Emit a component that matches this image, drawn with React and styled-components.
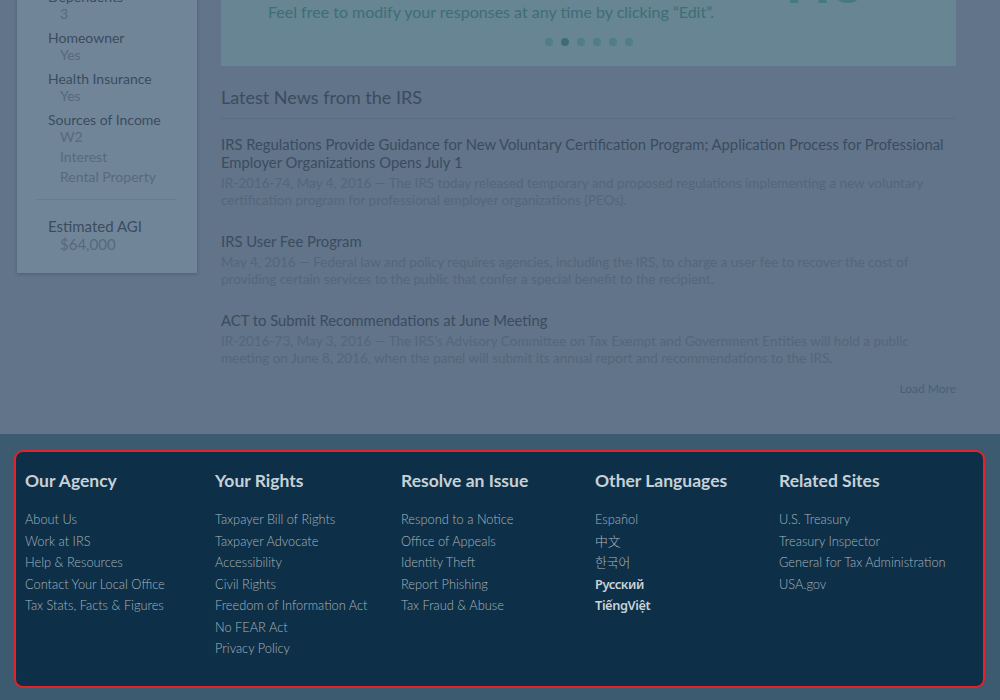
import React from "react";
import styled, { createGlobalStyle } from "styled-components";

const GlobalStyle = createGlobalStyle`
  html, body { margin: 0; padding: 0; background: #617489; }
  body { font-family: Lato, "Open Sans", sans-serif; overflow: hidden; }
  * { box-sizing: border-box; }
`;

const Page = styled.div`
  width: 1000px;
  display: flex;
  flex-direction: column;
`;

const Top = styled.div`
  display: flex;
  align-items: flex-start;
  gap: 24px;
  padding: 0 44px 38px 17px;
  margin-top: -60px;
  background: #617489;
`;

const Sidebar = styled.aside`
  width: 180px;
  flex: none;
  background: #718599;
  box-shadow: 0 1px 3px rgba(20, 35, 55, 0.25);
  padding: 9px 21px 12px 20px;
`;

const Group = styled.div`
  padding-left: 11px;
  margin-bottom: 7px;
`;

const Label = styled.div`
  font-size: ${(p) => (p.$big ? "15px" : "14px")};
  line-height: ${(p) => (p.$big ? "16px" : "14px")};
  color: #3a4c5f;
  white-space: nowrap;
`;

const Value = styled.div`
  font-size: ${(p) => (p.$big ? "15px" : "14px")};
  line-height: 20px;
  color: #56697d;
  padding-left: 12px;
  white-space: nowrap;
`;

const SideRule = styled.hr`
  border: 0;
  border-top: 1px solid #66798d;
  margin: 12px 0 18px;
`;

const Main = styled.main`
  flex: 1;
  min-width: 0;
  display: flex;
  flex-direction: column;
`;

const Hero = styled.section`
  background: #678592;
  padding: 11px 47px 20px;
  display: flex;
  flex-direction: column;
`;

const HeroRow = styled.div`
  display: flex;
  justify-content: space-between;
  align-items: flex-start;
`;

const HeroText = styled.div`
  display: flex;
  flex-direction: column;
`;

const HeroTitle = styled.h2`
  margin: 0;
  font-size: 22px;
  line-height: 28px;
  font-weight: 700;
  color: #3e6e76;
`;

const HeroLine = styled.p`
  margin: 0;
  font-size: 16px;
  line-height: 22px;
  color: #3e6e76;
`;

const BigFigure = styled.div`
  font-size: 60px;
  line-height: 1;
  font-weight: 700;
  color: #467980;
  margin-right: 44px;
  margin-top: -1px;
`;

const Dots = styled.div`
  display: flex;
  justify-content: center;
  gap: 8px;
  margin-top: 15px;
`;

const Dot = styled.span`
  width: 8px;
  height: 8px;
  border-radius: 50%;
  background: ${(p) => (p.$active ? "#3f6d75" : "#4f7e86")};
`;

const NewsHeading = styled.h3`
  margin: 20px 0 0;
  padding-bottom: 10px;
  border-bottom: 1px solid #5a6d82;
  font-size: 18px;
  line-height: 22px;
  font-weight: 400;
  color: #3a4c60;
`;

const NewsList = styled.div`
  display: flex;
  flex-direction: column;
  gap: 24px;
  margin-top: 16px;
`;

const NewsItem = styled.article`
  display: flex;
  flex-direction: column;
  gap: 4px;
`;

const NewsTitle = styled.h4`
  margin: 0;
  font-size: 14.8px;
  line-height: 18px;
  font-weight: 400;
  color: #3a4c60;
`;

const NewsBody = styled.p`
  margin: 0;
  font-size: 13.5px;
  line-height: 16.5px;
  color: #53677a;
`;

const LoadMore = styled.div`
  align-self: flex-end;
  margin-top: 16px;
  font-size: 12px;
  line-height: 14px;
  color: #44627a;
`;

const Footer = styled.footer`
  background: #3c5a70;
  padding: 16px 15px 20px 14px;
`;

const FooterBox = styled.div`
  border: 2px solid #e4222a;
  border-radius: 9px;
  background: #0d3048;
  padding: 18px 9px 26px;
  display: grid;
  grid-template-columns: 190px 186px 194px 184px 1fr;
`;

const Col = styled.div`
  display: flex;
  flex-direction: column;
`;

const ColTitle = styled.h5`
  margin: 0 0 17px;
  font-size: 17.5px;
  line-height: 22px;
  font-weight: 700;
  color: #c7d0d6;
`;

const FLink = styled.a`
  font-size: 12.8px;
  line-height: 21.5px;
  color: ${(p) => (p.$alt === "bold" ? "#c9d1d7" : "#a8b3bc")};
  text-decoration: none;
  font-family: ${(p) =>
    p.$alt === "bold"
      ? '"Noto Sans", "Open Sans", sans-serif'
      : p.$alt === "cjk"
      ? 'Lato, "Noto Sans CJK SC", "Noto Sans CJK KR", sans-serif'
      : "Lato, sans-serif"};
  font-weight: ${(p) => (p.$alt === "bold" ? 600 : 300)};
  letter-spacing: ${(p) => (p.$alt === "bold" ? "-0.4px" : "0")};
`;

const profile = [
  { label: "Filing Status", values: ["Married"] },
  { label: "Dependents", values: ["3"] },
  { label: "Homeowner", values: ["Yes"] },
  { label: "Health Insurance", values: ["Yes"] },
  { label: "Sources of Income", values: ["W2", "Interest", "Rental Property"] },
];

const news = [
  {
    title:
      "IRS Regulations Provide Guidance for New Voluntary Certification Program; Application Process for Professional Employer Organizations Opens July 1",
    body:
      "IR-2016-74, May 4, 2016 — The IRS today released temporary and proposed regulations implementing a new voluntary certification program for professional employer organizations (PEOs).",
  },
  {
    title: "IRS User Fee Program",
    body:
      "May 4, 2016 — Federal law and policy requires agencies, including the IRS, to charge a user fee to recover the cost of providing certain services to the public that confer a special benefit to the recipient.",
  },
  {
    title: "ACT to Submit Recommendations at June Meeting",
    body:
      "IR-2016-73, May 3, 2016 — The IRS’s Advisory Committee on Tax Exempt and Government Entities will hold a public meeting on June 8, 2016, when the panel will submit its annual report and recommendations to the IRS.",
  },
];

const footerCols = [
  {
    title: "Our Agency",
    links: ["About Us", "Work at IRS", "Help & Resources", "Contact Your Local Office", "Tax Stats, Facts & Figures"],
  },
  {
    title: "Your Rights",
    links: [
      "Taxpayer Bill of Rights",
      "Taxpayer Advocate",
      "Accessibility",
      "Civil Rights",
      "Freedom of Information Act",
      "No FEAR Act",
      "Privacy Policy",
    ],
  },
  {
    title: "Resolve an Issue",
    links: ["Respond to a Notice", "Office of Appeals", "Identity Theft", "Report Phishing", "Tax Fraud & Abuse"],
  },
  {
    title: "Other Languages",
    links: [
      { text: "Español" },
      { text: "中文", alt: "cjk" },
      { text: "한국어", alt: "cjk" },
      { text: "Русский", alt: "bold" },
      { text: "TiếngViệt", alt: "bold" },
    ],
  },
  {
    title: "Related Sites",
    links: ["U.S. Treasury", "Treasury Inspector", "General for Tax Administration", "USA.gov"],
  },
];

export default function App() {
  return (
    <Page>
      <GlobalStyle />
      <Top>
        <Sidebar>
          {profile.map((g) => (
            <Group key={g.label}>
              <Label>{g.label}</Label>
              {g.values.map((v) => (
                <Value key={v}>{v}</Value>
              ))}
            </Group>
          ))}
          <SideRule />
          <Group>
            <Label $big>Estimated AGI</Label>
            <Value $big>$64,000</Value>
          </Group>
        </Sidebar>
        <Main>
          <Hero>
            <HeroRow>
              <HeroText>
                <HeroTitle>Your dashboard is ready!</HeroTitle>
                <HeroLine>Based on your answers, we’ve tailored this page to you.</HeroLine>
                <HeroLine>Feel free to modify your responses at any time by clicking “Edit”.</HeroLine>
              </HeroText>
              <BigFigure>Ho</BigFigure>
            </HeroRow>
            <Dots>
              {[0, 1, 2, 3, 4, 5].map((i) => (
                <Dot key={i} $active={i === 1} />
              ))}
            </Dots>
          </Hero>
          <NewsHeading>Latest News from the IRS</NewsHeading>
          <NewsList>
            {news.map((n) => (
              <NewsItem key={n.title}>
                <NewsTitle>{n.title}</NewsTitle>
                <NewsBody>{n.body}</NewsBody>
              </NewsItem>
            ))}
          </NewsList>
          <LoadMore>Load More</LoadMore>
        </Main>
      </Top>
      <Footer>
        <FooterBox>
          {footerCols.map((c) => (
            <Col key={c.title}>
              <ColTitle>{c.title}</ColTitle>
              {c.links.map((l) => {
                const item = typeof l === "string" ? { text: l } : l;
                return (
                  <FLink key={item.text} href="#" $alt={item.alt}>
                    {item.text}
                  </FLink>
                );
              })}
            </Col>
          ))}
        </FooterBox>
      </Footer>
    </Page>
  );
}
